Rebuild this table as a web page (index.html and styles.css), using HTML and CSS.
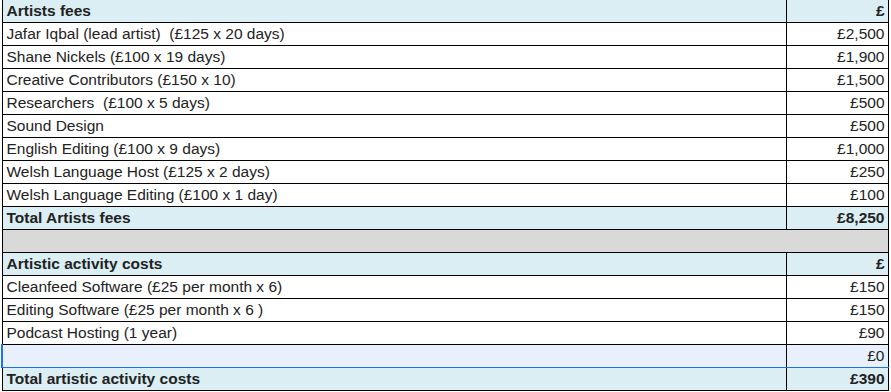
FILE: index.html
```html
<!DOCTYPE html>
<html lang="en">
<head>
<meta charset="utf-8">
<title>Budget</title>
<link rel="stylesheet" href="styles.css">
</head>
<body>
<table class="budget">
  <colgroup><col class="c-label"><col class="c-amount"></colgroup>
  <tbody>
    <tr class="head first"><td>Artists fees</td><td class="amt">£</td></tr>
    <tr><td>Jafar Iqbal (lead artist)&nbsp; (£125 x 20 days)</td><td class="amt">£2,500</td></tr>
    <tr><td>Shane Nickels (£100 x 19 days)</td><td class="amt">£1,900</td></tr>
    <tr><td>Creative Contributors (£150 x 10)</td><td class="amt">£1,500</td></tr>
    <tr><td>Researchers&nbsp; (£100 x 5 days)</td><td class="amt">£500</td></tr>
    <tr><td>Sound Design</td><td class="amt">£500</td></tr>
    <tr><td>English Editing (£100 x 9 days)</td><td class="amt">£1,000</td></tr>
    <tr><td>Welsh Language Host (£125 x 2 days)</td><td class="amt">£250</td></tr>
    <tr><td>Welsh Language Editing (£100 x 1 day)</td><td class="amt">£100</td></tr>
    <tr class="head"><td>Total Artists fees</td><td class="amt">£8,250</td></tr>
    <tr class="spacer"><td colspan="2"></td></tr>
    <tr class="head"><td>Artistic activity costs</td><td class="amt">£</td></tr>
    <tr><td>Cleanfeed Software (£25 per month x 6)</td><td class="amt">£150</td></tr>
    <tr><td>Editing Software (£25 per month x 6 )</td><td class="amt">£150</td></tr>
    <tr><td>Podcast Hosting (1 year)</td><td class="amt">£90</td></tr>
    <tr class="selected"><td></td><td class="amt">£0</td></tr>
    <tr class="head"><td>Total artistic activity costs</td><td class="amt">£390</td></tr>
  </tbody>
</table>
</body>
</html>
```

FILE: styles.css
```css
html, body {
  margin: 0;
  padding: 0;
  background: #ffffff;
}

body {
  font-family: "Liberation Sans", Arial, sans-serif;
  font-size: 15.5px;
  color: #222222;
}

.budget {
  border-collapse: collapse;
  table-layout: fixed;
  width: 887px;
  margin-left: 1px;
}

.c-label { width: 784px; }
.c-amount { width: 102px; }

.budget td {
  border: 1px solid #000000;
  height: 23px;
  padding: 0 3px 0 4px;
  box-sizing: border-box;
  line-height: 21px;
  white-space: nowrap;
  overflow: hidden;
  vertical-align: middle;
}

.budget .first td {
  border-top: 0;
  height: 22px;
}

.budget .amt {
  text-align: right;
}

.head td {
  background: #daeef3;
  font-weight: bold;
}

.spacer td {
  background: #d9d9d9;
}

.selected td {
  background: #e8f0fe;
  border-top-color: #1a73e8;
  border-bottom-color: #1a73e8;
}

.selected td:first-child {
  border-left: 2px solid #1a73e8;
}
```
